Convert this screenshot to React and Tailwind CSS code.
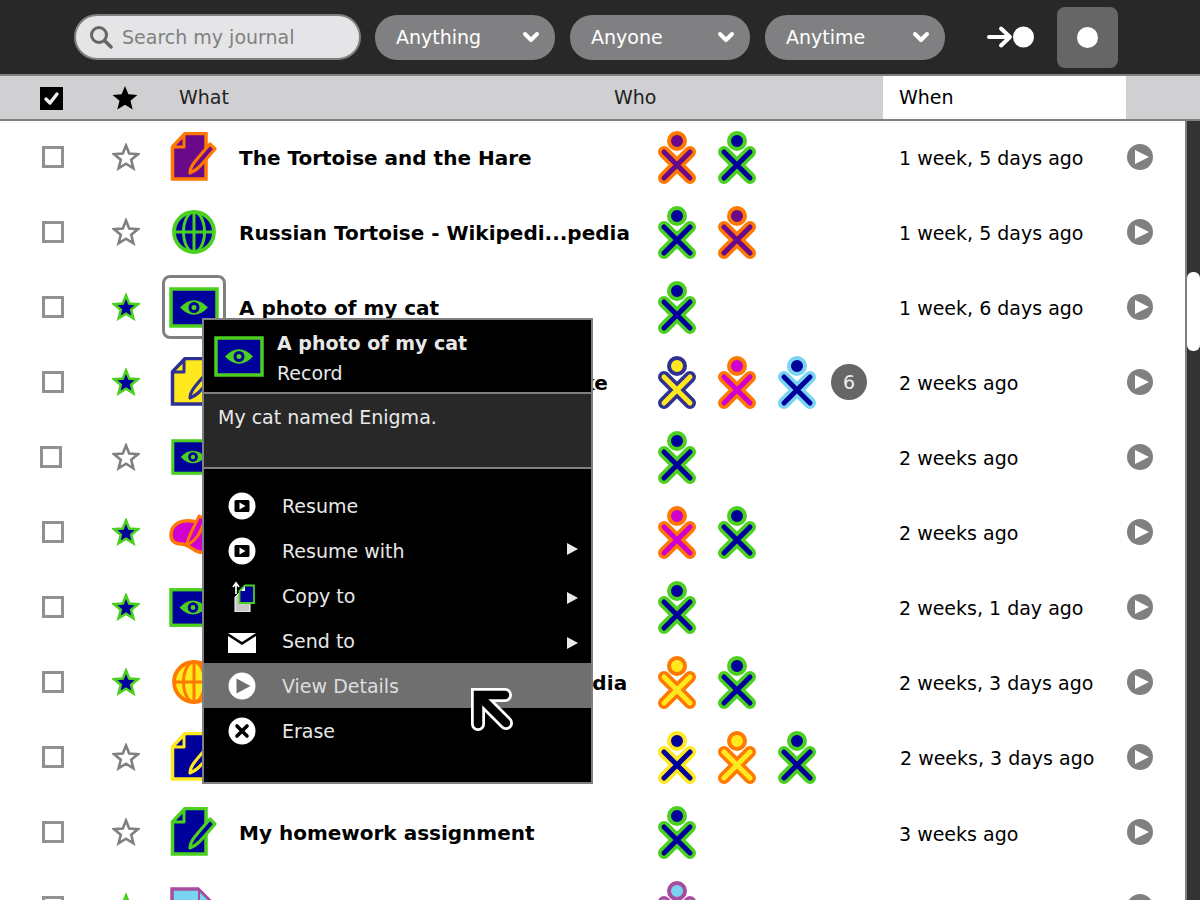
import React from 'react';

const GREEN = '#4bd01f';
const NAVY = '#00009a';
const ORANGE = '#ff7800';
const PURPLE = '#6a0a8a';
const YELLOW = '#ffe81e';
const INDIGO = '#2e3192';
const MAGENTA = '#d000d0';
const CYAN = '#78d4f0';
const PLUM = '#a84ca0';

// Little XO buddy figure
const Buddy = ({ fill, stroke }) => (
  <svg width="40" height="54" viewBox="0 0 40 54" className="shrink-0 mt-0.5">
    <circle cx="20" cy="10" r="8" fill={fill} stroke={stroke} strokeWidth="4" />
    <path d="M7 21 L33 47 M33 21 L7 47" stroke={stroke} strokeWidth="12" strokeLinecap="round" fill="none" />
    <path d="M7 21 L33 47 M33 21 L7 47" stroke={fill} strokeWidth="5" strokeLinecap="round" fill="none" />
  </svg>
);

const DocIcon = ({ fill, stroke }) => (
  <svg width="50" height="50" viewBox="0 0 50 50">
    <path d="M3.5 15 L16 1.5 L37 1.5 L37 47 L3.5 47 Z" fill={fill} stroke={stroke} strokeWidth="3.5" />
    <path d="M3.5 15 L15 15 L15 3 Z" fill={fill} stroke={stroke} strokeWidth="3" strokeLinejoin="round" />
    <path d="M21 41 C21 34 27 28 41 12 L46 17 C32 33 29 38 21 41 Z" fill={fill} stroke={stroke} strokeWidth="3.2" strokeLinejoin="round" />
  </svg>
);

// same page but folded at the top right, only its top shows at the bottom of the list
const PageIcon = ({ fill, stroke }) => (
  <svg width="50" height="50" viewBox="0 0 50 50">
    <path d="M3 7 H29 L42 20 V50 H3 Z" fill={fill} stroke={stroke} strokeWidth="3.5" />
    <path d="M30 8 V20 H42 Z" fill={fill} stroke={stroke} strokeWidth="2" />
  </svg>
);

const EyeIcon = ({ small }) => (
  <svg width={small ? 44 : 50} height={small ? 36 : 41} viewBox="0 0 50 41">
    <rect x="2" y="2" width="46" height="37" fill={NAVY} stroke={GREEN} strokeWidth="3.5" />
    <path d="M11 20.5 Q25 6 39 20.5 Q25 35 11 20.5 Z" fill={GREEN} />
    <circle cx="25" cy="20.5" r="4" fill={GREEN} stroke={NAVY} strokeWidth="3" />
  </svg>
);

const GlobeIcon = ({ fill, stroke }) => (
  <svg width="44" height="44" viewBox="0 0 44 44">
    <circle cx="22" cy="22" r="20" fill={fill} stroke={stroke} strokeWidth="3.8" />
    <ellipse cx="22" cy="22" rx="10.5" ry="20" fill="none" stroke={stroke} strokeWidth="3" />
    <path d="M2 22 H42 M22 2 V42" stroke={stroke} strokeWidth="3" fill="none" />
  </svg>
);

const BlobIcon = () => (
  <svg width="50" height="44" viewBox="0 0 50 44">
    <path d="M2 25 C2 14 12 10 22 11 C32 12 46 14 46 28 C46 38 36 43 30 42 C24 41 20 34 12 34 C6 34 2 31 2 25 Z" fill={MAGENTA} stroke={ORANGE} strokeWidth="3.5" />
    <path d="M18 35 C18 28 24 20 30 6 L36 9 C32 22 28 30 18 35 Z" fill={MAGENTA} stroke={ORANGE} strokeWidth="3" strokeLinejoin="round" />
  </svg>
);

const Star = ({ on }) => (
  <svg width="28" height="28" viewBox="0 0 28 28">
    <path
      d="M14 2.5 L17.2 10.6 L25.9 11.2 L19.2 16.8 L21.4 25.3 L14 20.7 L6.6 25.3 L8.8 16.8 L2.1 11.2 L10.8 10.6 Z"
      fill={on ? NAVY : 'none'}
      stroke={on ? GREEN : '#808080'}
      strokeWidth="2.6"
    />
  </svg>
);

const PlayCircle = () => (
  <svg width="26" height="26" viewBox="0 0 26 26">
    <circle cx="13" cy="13" r="13" fill="#808083" />
    <path d="M8 6 L22 13 L8 20 Z" fill="#fff" />
  </svg>
);

const rows = [
  { title: 'The Tortoise and the Hare', icon: <DocIcon fill={PURPLE} stroke={ORANGE} />, who: [[PURPLE, ORANGE], [NAVY, GREEN]], when: '1 week, 5 days ago' },
  { title: 'Russian Tortoise - Wikipedi...pedia', icon: <GlobeIcon fill={NAVY} stroke={GREEN} />, who: [[NAVY, GREEN], [PURPLE, ORANGE]], when: '1 week, 5 days ago' },
  { title: 'A photo of my cat', starred: true, framed: true, icon: <EyeIcon />, who: [[NAVY, GREEN]], when: '1 week, 6 days ago' },
  { title: 'The Enigma tale I wrote to make', titleClass: 'tracking-[0.07px]', starred: true, icon: <DocIcon fill={YELLOW} stroke={INDIGO} />, who: [[YELLOW, INDIGO], [MAGENTA, ORANGE], [NAVY, CYAN]], extra: 6, when: '2 weeks ago' },
  { title: 'Another cat photo', icon: <EyeIcon small />, iconClass: 'pr-0.5', who: [[NAVY, GREEN]], when: '2 weeks ago', checkClass: '-ml-0.5' },
  { title: 'Cat painting', starred: true, icon: <BlobIcon />, who: [[MAGENTA, ORANGE], [NAVY, GREEN]], when: '2 weeks ago' },
  { title: 'Enigma asleep', starred: true, icon: <EyeIcon />, iconClass: 'pr-0.5', who: [[NAVY, GREEN]], when: '2 weeks, 1 day ago' },
  { title: 'Maine Coon Cat - Wikipedi...pedia', titleClass: 'tracking-[0.2px]', starred: true, icon: <GlobeIcon fill={YELLOW} stroke={ORANGE} />, who: [[YELLOW, ORANGE], [NAVY, GREEN]], when: '2 weeks, 3 days ago' },
  { title: 'Notes on tortoises', icon: <DocIcon fill={NAVY} stroke={YELLOW} />, who: [[NAVY, YELLOW], [YELLOW, ORANGE], [NAVY, GREEN]], when: '2 weeks, 3 days ago', whenClass: 'pl-px pt-0.5' },
  { title: 'My homework assignment', icon: <DocIcon fill={NAVY} stroke={GREEN} />, who: [[NAVY, GREEN]], when: '3 weeks ago', whenClass: 'pt-1' },
  { title: 'Book report', starred: true, icon: <PageIcon fill={CYAN} stroke={PLUM} />, who: [[CYAN, PLUM]], when: '3 weeks ago' },
];

const Combo = ({ label }) => (
  <div className="flex items-center justify-between w-[180px] h-[45px] rounded-[22px] bg-[#808083] pl-[21px] pr-[15px] text-white">
    <span className="pt-px">{label}</span>
    <svg width="18" height="14" viewBox="0 0 18 14">
      <path d="M3 4 L9 10 L15 4" fill="none" stroke="#fff" strokeWidth="4" strokeLinecap="round" strokeLinejoin="round" />
    </svg>
  </div>
);

const Row = ({ row }) => (
  <div className="flex items-center h-[75px] shrink-0">
    <div className="w-[111px] pl-[42px]">
      <div className={`w-[22px] h-[22px] border-[3px] border-[#919191] bg-white ${row.checkClass || ''}`} />
    </div>
    <div className="w-[58px] pl-px">
      <Star on={row.starred} />
    </div>
    <div className="relative w-[70px] h-[50px] flex items-center">
      <div className={`w-[50px] flex justify-center ${row.iconClass || ''}`}>{row.icon}</div>
      {row.framed && (
        <div className="absolute left-[-7px] top-[-7px] w-[64px] h-[64px] rounded-lg border-[3px] border-[#808080]" />
      )}
    </div>
    <div className={`w-[418px] pt-0.5 text-[20px] font-bold whitespace-nowrap text-black ${row.titleClass || ''}`}>{row.title}</div>
    <div className="w-[242px] flex items-center gap-5">
      {row.who.map((b, i) => (
        <Buddy key={i} fill={b[0]} stroke={b[1]} />
      ))}
      {row.extra && (
        <div className="-ml-1.5 w-9 h-9 rounded-full bg-[#666] text-[#eee] flex items-center justify-center">{row.extra}</div>
      )}
    </div>
    <div className={`w-[228px] whitespace-nowrap text-black ${row.whenClass || 'pt-0.5'}`}>{row.when}</div>
    <PlayCircle />
  </div>
);

const CircleResume = () => (
  <svg width="28" height="28" viewBox="0 0 28 28">
    <circle cx="14" cy="14" r="13.5" fill="#fff" />
    <rect x="6.5" y="8" width="15" height="12" rx="1.5" fill="#000" />
    <path d="M11.5 10.5 L17.5 14 L11.5 17.5 Z" fill="#fff" />
  </svg>
);

const CopyIcon = () => (
  <svg width="28" height="32" viewBox="0 0 28 32">
    <path d="M7 17 L11 13 H22 V32 H7 Z" fill="#c8c8c8" stroke="#fff" strokeWidth="1" />
    <path d="M11.5 11 L17 5.5 H26 V23 H11.5 Z" fill={NAVY} stroke={GREEN} strokeWidth="1.8" />
    <path d="M13 11 H17 V6.5 Z" fill="#fff" />
    <path d="M8 14 V4 M5 7 L8 3 L11 7" stroke="#fff" strokeWidth="1.7" fill="none" />
  </svg>
);

const MailIcon = () => (
  <svg width="28" height="20" viewBox="0 0 28 20" className="mt-1">
    <path d="M0 0 H28 L14 9 Z" fill="#fff" />
    <path d="M0 3 L14 12 L28 3 V20 H0 Z" fill="#fff" />
  </svg>
);

const ViewIcon = () => (
  <svg width="28" height="28" viewBox="0 0 28 28">
    <circle cx="14" cy="14" r="13.5" fill="#fff" />
    <path d="M8.5 6.5 L22.5 14 L8.5 21.5 Z" fill="#6f6f6f" />
  </svg>
);

const EraseIcon = () => (
  <svg width="28" height="28" viewBox="0 0 28 28">
    <circle cx="14" cy="14" r="13.5" fill="#fff" />
    <path d="M9 9 L19 19 M19 9 L9 19" stroke="#000" strokeWidth="3.6" strokeLinecap="round" />
  </svg>
);

const menu = [
  { label: 'Resume', icon: <CircleResume /> },
  { label: 'Resume with', icon: <CircleResume />, sub: 'top-[15px]' },
  { label: 'Copy to', icon: <CopyIcon />, sub: 'top-[19px]' },
  { label: 'Send to', icon: <MailIcon />, sub: 'top-[19px]' },
  { label: 'View Details', icon: <ViewIcon />, active: true },
  { label: 'Erase', icon: <EraseIcon /> },
];

const Palette = () => (
  <div className="absolute left-[202px] top-[318px] w-[391px] h-[466px] flex flex-col border-2 border-[#808080] bg-black text-[#e8e8e8]">
    <div className="h-[72px] flex items-center pl-[10px] gap-[13px] shrink-0">
      <EyeIcon />
      <div className="leading-[30px] pt-[3px]">
        <div className="font-bold">A photo of my cat</div>
        <div>Record</div>
      </div>
    </div>
    <div className="h-[77px] shrink-0 bg-[#282828] border-y-2 border-[#808080] pl-[14px] pt-[9px]">My cat named Enigma.</div>
    <div className="pt-[14px]">
      {menu.map((m) => (
        <div key={m.label} className={`relative flex items-center h-[45px] ${m.active ? 'bg-[#6f6f6f]' : ''}`}>
          <div className="w-[78px] pr-0.5 flex justify-center">{m.icon}</div>
          <span className={`pt-px ${m.active ? 'text-[#dedede]' : ''}`}>{m.label}</span>
          {m.sub && (
            <svg width="11" height="12" viewBox="0 0 11 12" className={`absolute left-[363px] ${m.sub}`}>
              <path d="M0 0 L11 6 L0 12 Z" fill="#e8e8e8" />
            </svg>
          )}
        </div>
      ))}
    </div>
  </div>
);

const Cursor = () => (
  <svg width="50" height="50" viewBox="0 0 50 50" className="absolute left-[468px] top-[685px]">
    <path d="M37 10 H10 V39 M10 10 L38 38" fill="none" stroke="#fff" strokeWidth="14" strokeLinecap="round" />
    <path d="M37 10 H10 V39 M10 10 L38 38" fill="none" stroke="#000" strokeWidth="8.5" strokeLinecap="round" />
  </svg>
);

export default function App() {
  return (
    <div className="relative w-[1200px] h-[900px] overflow-hidden bg-white flex flex-col text-[19px] font-['DejaVu_Sans',sans-serif]">
      {/* toolbar */}
      <div className="h-[74px] shrink-0 bg-[#282828] flex items-center pl-[74px]">
        <div className="flex items-center w-[287px] h-[46px] rounded-[23px] bg-[#e5e5e7] border-2 border-[#808080] pl-[13px] gap-[9px] text-[#808080]">
          <svg width="24" height="24" viewBox="0 0 24 24">
            <circle cx="10" cy="10" r="7.5" fill="none" stroke="#666" strokeWidth="3" />
            <path d="M15.5 15.5 L22 22" stroke="#666" strokeWidth="3.5" strokeLinecap="round" />
          </svg>
          <span className="pt-px">Search my journal</span>
        </div>
        <div className="flex gap-[15px] ml-[14px]">
          <Combo label="Anything" />
          <Combo label="Anyone" />
          <Combo label="Anytime" />
        </div>
        <svg width="50" height="24" viewBox="0 0 50 24" className="ml-[42px]">
          <path d="M2 12 H22 M14 3.5 L23 12 L14 20.5" fill="none" stroke="#fff" strokeWidth="4" strokeLinecap="round" strokeLinejoin="round" />
          <circle cx="36.5" cy="12" r="10.5" fill="#fff" />
        </svg>
        <div className="ml-[20px] w-[61px] h-[61px] rounded-lg bg-[#666] flex items-center justify-center">
          <div className="w-[21px] h-[21px] rounded-full bg-white" />
        </div>
      </div>
      {/* column headers */}
      <div className="h-[47px] shrink-0 flex bg-[#d0d0d2] border-y-2 border-[#808080] text-[#222]">
        <div className="w-[112px] pl-[40px] flex items-center">
          <div className="w-[23px] h-[23px] mt-0.5 bg-black flex items-center justify-center">
            <svg width="17" height="17" viewBox="0 0 17 17">
              <path d="M3 9 L7 13 L14 4" fill="none" stroke="#eee" strokeWidth="3.4" strokeLinecap="round" strokeLinejoin="round" />
            </svg>
          </div>
        </div>
        <div className="w-[67px] flex items-center">
          <svg width="26" height="26" viewBox="0 0 26 26">
            <path d="M13 1 L16.4 9.3 L25.4 9.9 L18.5 15.7 L20.7 24.5 L13 19.7 L5.3 24.5 L7.5 15.7 L0.6 9.9 L9.6 9.3 Z" fill="#000" />
          </svg>
        </div>
        <div className="w-[435px] flex items-center">What</div>
        <div className="w-[269px] flex items-center">Who</div>
        <div className="w-[243px] bg-white text-black flex items-center pl-[16px]">When</div>
      </div>
      {/* list + scrollbar */}
      <div className="flex-1 min-h-0 flex">
        <div className="w-[1185px] -mt-[1.5px] flex flex-col overflow-hidden">
          {rows.map((r) => (
            <Row key={r.title} row={r} />
          ))}
        </div>
        <div className="w-[15px] bg-[#333] border-l-2 border-[#808080] pt-[151px]">
          <div className="w-[13px] h-[79px] rounded-[6px] bg-white" />
        </div>
      </div>
      <Palette />
      <Cursor />
    </div>
  );
}
